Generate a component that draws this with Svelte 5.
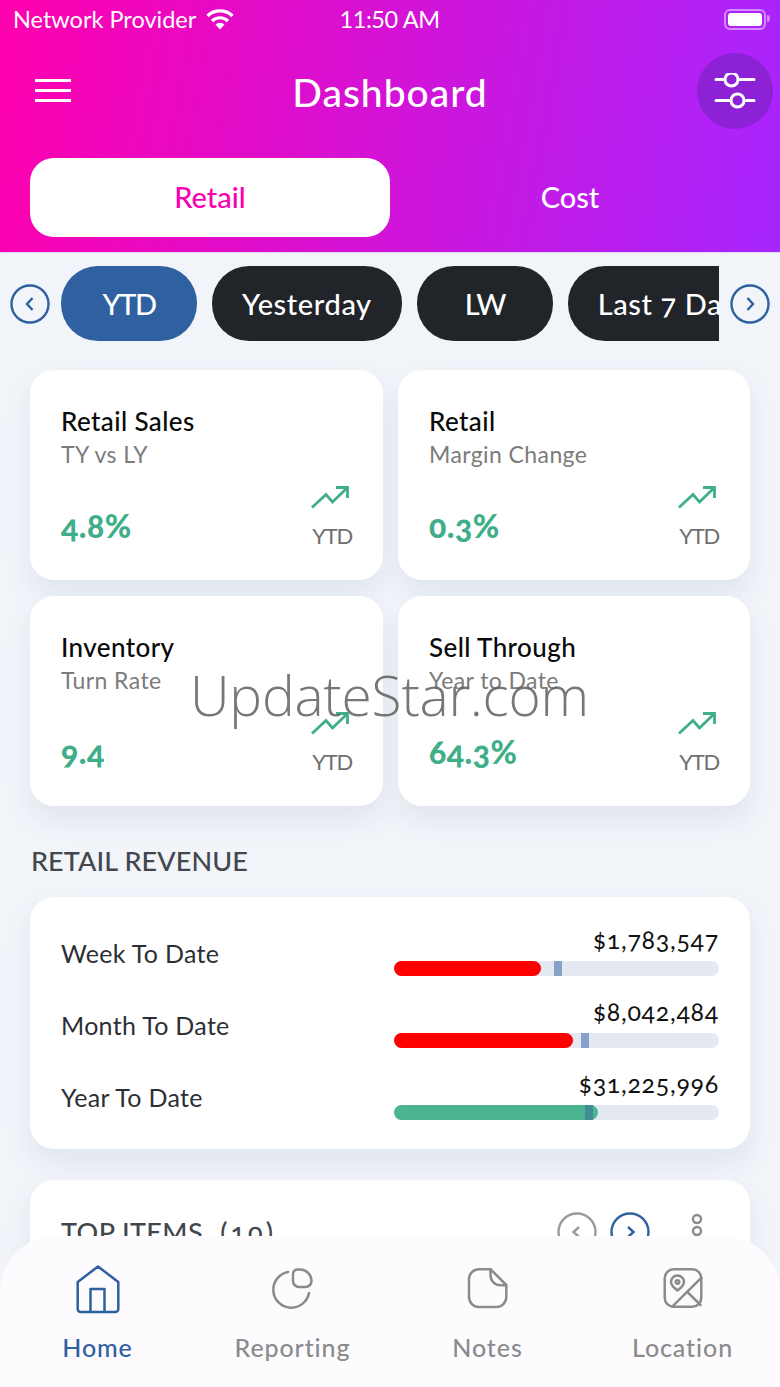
<script>
  const ranges = [
    { label: 'YTD', active: true, short: true },
    { label: 'Yesterday' },
    { label: 'LW', short: true },
    { label: 'Last 7 Days' },
  ];

  const kpis = [
    { title: 'Retail Sales', sub: 'TY vs LY', value: '4.8%' },
    { title: 'Retail', sub: 'Margin Change', value: '0.3%' },
    { title: 'Inventory', sub: 'Turn Rate', value: '9.4' },
    { title: 'Sell Through', sub: 'Year to Date', value: '64.3%' },
  ];

  const revenue = [
    { label: 'Week To Date', amount: '$1,783,547', pct: 45.3, mark: 49.2, color: '#ff0000', markColor: '#86a2c8' },
    { label: 'Month To Date', amount: '$8,042,484', pct: 55.1, mark: 57.4, color: '#ff0000', markColor: '#8aa0cc' },
    { label: 'Year To Date', amount: '$31,225,996', pct: 62.7, mark: 58.7, color: '#4bb58f', markColor: '#418d96' },
  ];

  const tabs = [
    { id: 'home', label: 'Home', active: true },
    { id: 'reporting', label: 'Reporting' },
    { id: 'notes', label: 'Notes' },
    { id: 'location', label: 'Location' },
  ];
</script>

<div class="screen">
  <header class="hero">
    <div class="status">
      <div class="carrier">
        <span>Network Provider</span>
        <svg width="28" height="22" viewBox="0 0 28 22" fill="none" stroke="#fff" stroke-width="3.2">
          <path d="M1.500 8a18 18 0 0 1 25 0" />
          <path d="M6 13a11.500 11.500 0 0 1 16 0" />
          <path d="M14 21.500l-4.500-5a6.500 6.500 0 0 1 9 0z" fill="#fff" stroke="none" />
        </svg>
      </div>
      <span class="clock">11:50 AM</span>
      <div class="battery"><i></i></div>
    </div>

    <div class="titlebar">
      <button class="menu" aria-label="Menu"><i></i><i></i><i></i></button>
      <h1>Dashboard</h1>
      <button class="filter" aria-label="Filter">
        <svg width="42" height="36" viewBox="0 0 42 36" fill="none" stroke="#fff" stroke-width="3" stroke-linecap="round">
          <path d="M2 6.500h7M26 6.500h14M2 27.500h13M32 27.500h8" />
          <circle cx="17.500" cy="6.500" r="6.500" />
          <circle cx="23.500" cy="27.500" r="6.500" />
        </svg>
      </button>
    </div>

    <div class="segments">
      <button class="segment on">Retail</button>
      <button class="segment">Cost</button>
    </div>
  </header>

  <div class="ranges">
    <button class="arrow" aria-label="Previous">
      <svg width="40" height="40" viewBox="0 0 40 40" fill="none" stroke="#2f609f" stroke-width="2.4"><circle cx="20" cy="20" r="18.500" /><path d="M22.500 14l-5.500 6 5.500 6" /></svg>
    </button>
    <div class="pills">
      {#each ranges as r (r.label)}
        <span class="pill" class:active={r.active} class:short={r.short}>{r.label}</span>
      {/each}
    </div>
    <button class="arrow" aria-label="Next">
      <svg width="40" height="40" viewBox="0 0 40 40" fill="none" stroke="#2f609f" stroke-width="2.4"><circle cx="20" cy="20" r="18.500" /><path d="M17.500 14l5.500 6-5.500 6" /></svg>
    </button>
  </div>

  <section class="kpis">
    {#each kpis as k (k.title)}
      <article class="kpi">
        <h3>{k.title}</h3>
        <p class="sub">{k.sub}</p>
        <div class="kpi-foot">
          <strong>{k.value}</strong>
          <div class="trend">
            <svg width="38" height="24" viewBox="0 0 38 24" fill="none" stroke="#3fae89" stroke-width="2.800">
              <path d="M1 22.500l14-13 6.500 7.500L36 3" />
              <path d="M25 2.500h11.500V13" />
            </svg>
            <span>YTD</span>
          </div>
        </div>
      </article>
    {/each}
  </section>

  <h2 class="heading">RETAIL REVENUE</h2>

  <section class="card revenue">
    {#each revenue as row (row.label)}
      <div class="rev-row">
        <span class="rev-label">{row.label}</span>
        <div class="rev-bar">
          <span class="amount">{row.amount}</span>
          <div class="track">
            <div class="fill" style="width:{row.pct}%;background:{row.color}"></div>
            <div class="mark" style="left:{row.mark}%;background:{row.markColor}"></div>
          </div>
        </div>
      </div>
    {/each}
  </section>

  <section class="card top">
    <h2>TOP ITEMS <span>(10)</span></h2>
    <div class="top-tools">
      <svg width="40" height="40" viewBox="0 0 40 40" fill="none" stroke="#9a9a9a" stroke-width="2.400"><circle cx="20" cy="20" r="18.500" /><path d="M22 15l-5.500 5 5.500 5" /></svg>
      <svg width="40" height="40" viewBox="0 0 40 40" fill="none" stroke="#2f609f" stroke-width="2.400"><circle cx="20" cy="20" r="18.500" /><path d="M18 15l5.500 5-5.500 5" /></svg>
      <svg class="dots" width="14" height="30" viewBox="0 0 14 30" fill="none" stroke="#8a8a8a" stroke-width="2.400"><circle cx="7" cy="6" r="4" /><circle cx="7" cy="18" r="4" /></svg>
    </div>
  </section>

  <nav class="tabbar">
    {#each tabs as t (t.id)}
      <div class="tab" class:current={t.active}>
        <svg width="46" height="50" viewBox="0 0 46 50" fill="none" stroke="currentColor" stroke-width="2.500" stroke-linejoin="round" stroke-linecap="round">
          {#if t.id === 'home'}
            <path d="M23 2.500L43.300 18v27a3 3 0 0 1-3 3H5.700a3 3 0 0 1-3-3V18z" />
            <path d="M15.500 48V25h14v23" />
          {:else if t.id === 'reporting'}
            <path d="M18 8A18 18 0 1 0 39 29" />
            <path d="M27 5.500h3A11.500 11.500 0 0 1 41.500 17a6 6 0 0 1-6 6H29a6 6 0 0 1-6-6v-6.500a5 5 0 0 1 4-5z" />
          {:else if t.id === 'notes'}
            <path d="M25.500 5.200H14a10 10 0 0 0-10 10V33a10 10 0 0 0 10 10h17.300a10 10 0 0 0 10-10V21z" />
            <path d="M25.500 5.200v6a10 10 0 0 0 10 10h5.800" />
          {:else}
            <rect x="4.700" y="5.200" width="36.600" height="37.600" rx="9" />
            <path d="M12.200 42.700L41.500 13.700M27 27.700l13.500 13.300" />
            <path d="M17.500 26.500c-4-3-6.500-5.500-6.500-8.500a6.500 6.500 0 0 1 13 0c0 3-2.500 5.500-6.500 8.500z" />
            <circle cx="17.500" cy="18" r="1.800" />
          {/if}
        </svg>
        <span>{t.label}</span>
      </div>
    {/each}
  </nav>

  <div class="watermark">UpdateStar.com</div>
</div>

<style>
  :global(body) {
    margin: 0;
    background: #f1f4f9;
  }
  button {
    background: none;
    border: 0;
    padding: 0;
    font: inherit;
    color: inherit;
  }
  .screen {
    position: relative;
    width: 780px;
    height: 1387px;
    overflow: hidden;
    background: #f1f4f9;
    font-family: Lato, "Noto Sans", sans-serif;
    font-variant-numeric: oldstyle-nums;
  }
  .hero {
    height: 253px;
    box-sizing: border-box;
    padding: 0 7px 0 30px;
    color: #fff;
    background: linear-gradient(100deg, #ff00ae 0%, #a626ff 100%);
    border-bottom: 1px solid #e7d3f3;
  }
  .status {
    display: grid;
    grid-template-columns: 1fr auto 1fr;
    align-items: center;
    height: 38px;
    margin-left: -17px;
    font-size: 23.500px;
  }
  .carrier {
    display: flex;
    align-items: center;
    gap: 10px;
  }
  .clock {
    font-variant-numeric: lining-nums;
    letter-spacing: -0.4px;
    margin-left: -7px;
  }
  .battery {
    position: relative;
    justify-self: end;
    width: 34px;
    height: 13px;
    padding: 2px;
    margin-right: 7px;
    margin-top: 1px;
    border: 2px solid #cf8bff;
    border-radius: 6px;
  }
  .battery::after {
    content: '';
    position: absolute;
    right: -6px;
    top: 4px;
    width: 3px;
    height: 7px;
    background: #cf8bff;
    border-radius: 0 3px 3px 0;
  }
  .battery i {
    display: block;
    height: 100%;
    background: #fff;
    border-radius: 3px;
  }
  .titlebar {
    display: grid;
    grid-template-columns: 1fr auto 1fr;
    align-items: center;
    height: 76px;
    margin-top: 15px;
  }
  .menu {
    display: flex;
    flex-direction: column;
    gap: 7px;
    width: 36px;
    margin: -2px 0 0 5px;
  }
  .menu i {
    display: block;
    height: 3px;
    background: #fff;
  }
  h1 {
    margin: 2px 0 0 -23px;
    font-size: 39px;
    font-weight: 500;
    letter-spacing: 1px;
  }
  .filter {
    justify-self: end;
    display: flex;
    align-items: center;
    justify-content: center;
    width: 76px;
    height: 76px;
    border-radius: 50%;
    background: #8d21d6;
  }
  .segments {
    display: grid;
    grid-template-columns: 1fr 1fr;
    width: 720px;
    height: 79px;
    margin-top: 29px;
    font-size: 29px;
    font-weight: 500;
    letter-spacing: 0.3px;
  }
  .segment {
    padding-bottom: 3px;
  }
  .segment.on {
    background: #fff;
    color: #f800b4;
    border-radius: 24px;
  }
  .ranges {
    display: flex;
    align-items: center;
    height: 75px;
    margin-top: 13px;
    padding-left: 10px;
    gap: 11px;
  }
  .arrow {
    flex: none;
    display: flex;
  }
  .pills {
    display: flex;
    gap: 15px;
    width: 658px;
    overflow: hidden;
  }
  .pill {
    flex: none;
    height: 75px;
    line-height: 75px;
    padding: 0 30px;
    min-width: 76px;
    text-align: center;
    border-radius: 37px;
    background: #212529;
    color: #fff;
    font-size: 29px;
    font-weight: 500;
    letter-spacing: 0.6px;
  }
  .pill.short {
    letter-spacing: -1.500px;
  }
  .pill.active {
    background: #2f609f;
  }
  .kpis {
    display: grid;
    grid-template-columns: 353px 352px;
    gap: 16px 15px;
    margin: 29px 0 0 30px;
  }
  .kpi {
    height: 210px;
    box-sizing: border-box;
    padding: 33px 31px 0;
    background: #fff;
    border-radius: 24px;
    box-shadow: 0 14px 24px rgba(160, 175, 200, 0.2);
  }
  .kpi h3 {
    margin: 0;
    font-size: 26px;
    line-height: 36px;
    font-weight: 500;
    color: #0a0a0a;
    letter-spacing: 0.4px;
  }
  .sub {
    margin: -1px 0 0;
    font-size: 23px;
    line-height: 32px;
    color: #7b7b7b;
    letter-spacing: 0.4px;
  }
  .kpi-foot {
    display: flex;
    justify-content: space-between;
    align-items: flex-end;
    margin-top: 15px;
  }
  .kpi-foot strong {
    font-size: 32px;
    font-weight: 900;
    line-height: 40px;
    color: #3fae89;
    letter-spacing: 0.5px;
    margin-bottom: 3px;
  }
  .trend {
    display: flex;
    flex-direction: column;
    align-items: flex-end;
    gap: 14px;
  }
  .trend svg {
    margin-right: 3px;
  }
  .trend span {
    font-size: 22px;
    line-height: 26px;
    color: #6f6f6f;
    letter-spacing: -1.200px;
  }
  .heading {
    margin: 37px 0 0 31px;
    height: 36px;
    font-size: 27px;
    line-height: 36px;
    font-weight: 500;
    color: #42474d;
    letter-spacing: 0.1px;
  }
  .card {
    margin: 0 30px;
    background: #fff;
    border-radius: 24px;
    box-shadow: 0 14px 24px rgba(160, 175, 200, 0.2);
  }
  .revenue {
    height: 252px;
    box-sizing: border-box;
    margin-top: 18px;
    padding: 28px 31px 0;
    display: flex;
    flex-direction: column;
    gap: 14px;
  }
  .rev-row {
    display: flex;
    align-items: center;
    justify-content: space-between;
    height: 58px;
  }
  .rev-label {
    margin-top: -2px;
    font-size: 25px;
    color: #2c3036;
    letter-spacing: 0.3px;
  }
  .rev-bar {
    display: flex;
    flex-direction: column;
    align-items: flex-end;
    gap: 5px;
    width: 325px;
    margin-bottom: 9px;
  }
  .amount {
    font-size: 25px;
    line-height: 33px;
    color: #111;
    letter-spacing: 0.7px;
  }
  .track {
    position: relative;
    width: 100%;
    height: 15px;
    border-radius: 8px;
    background: #e4e9f1;
  }
  .fill {
    height: 100%;
    border-radius: 8px;
  }
  .mark {
    position: absolute;
    top: 0;
    width: 8px;
    height: 100%;
  }
  .top {
    display: flex;
    justify-content: space-between;
    height: 200px;
    margin-top: 31px;
    padding: 32px 31px 0;
    box-sizing: border-box;
  }
  .top h2 {
    margin: 0;
    font-size: 27px;
    line-height: 40px;
    font-weight: 500;
    color: #42474d;
    letter-spacing: 0.4px;
  }
  .top h2 span {
    margin-left: 10px;
    letter-spacing: 3px;
  }
  .top-tools {
    display: flex;
    align-items: flex-start;
    gap: 13px;
  }
  .dots {
    margin: 1px 15px 0 27px;
  }
  .tabbar {
    position: absolute;
    left: 0;
    right: 0;
    bottom: 0;
    height: 151px;
    display: grid;
    grid-template-columns: repeat(4, 1fr);
    background: #fdfbfe;
    border-radius: 56px 56px 0 0;
  }
  .tab {
    display: flex;
    flex-direction: column;
    align-items: center;
    padding-top: 28px;
    color: #8b8b8d;
    font-size: 25px;
    font-weight: 500;
    letter-spacing: 0.9px;
    gap: 18px;
  }
  .tab.current {
    color: #2f609f;
  }
  .watermark {
    position: absolute;
    left: 190px;
    top: 657px;
    font-family: "Open Sans", sans-serif;
    font-weight: 300;
    font-size: 55px;
    line-height: 76px;
    letter-spacing: -0.2px;
    color: rgba(95, 95, 95, 0.85);
    white-space: nowrap;
  }
</style>
